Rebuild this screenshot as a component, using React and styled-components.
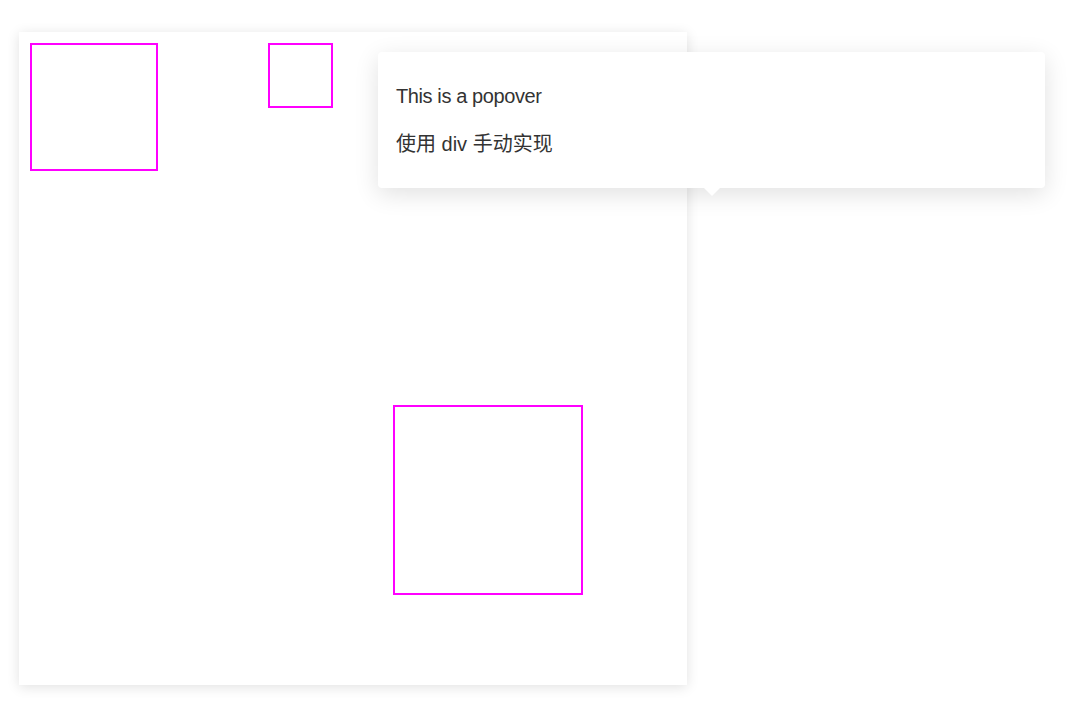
import styled, { createGlobalStyle } from 'styled-components';

const GlobalStyle = createGlobalStyle`
  html, body {
    margin: 0;
    padding: 0;
    background: #fff;
    font-family: "Liberation Sans", "Noto Sans CJK SC", sans-serif;
  }
`;

const Page = styled.div`
  position: relative;
  width: 1081px;
  height: 709px;
  padding: 32px 0 0 19px;
  box-sizing: border-box;
`;

const Card = styled.div`
  position: relative;
  width: 668px;
  height: 653px;
  background: #fff;
  box-shadow: 0 2px 12px 0 rgba(0, 0, 0, 0.12);
`;

const Target = styled.div`
  position: absolute;
  left: ${props => props.left}px;
  top: ${props => props.top}px;
  width: ${props => props.size}px;
  height: ${props => props.size}px;
  box-sizing: border-box;
  border: 2px solid #ff00ff;
`;

const Popover = styled.div`
  position: absolute;
  left: 378px;
  top: 52px;
  width: 667px;
  box-sizing: border-box;
  padding: 10px 18px;
  background: #fff;
  border-radius: 4px;
  box-shadow: 0 6px 24px 0 rgba(0, 0, 0, 0.12);
  color: #333;

  &::after {
    content: '';
    position: absolute;
    left: 50%;
    bottom: -8px;
    margin-left: -8px;
    border-style: solid;
    border-width: 8px 8px 0 8px;
    border-color: #fff transparent transparent transparent;
  }
`;

const Line = styled.p`
  margin: 20px 0;
  font-size: 20px;
  line-height: 28px;
  letter-spacing: ${props => (props.tight ? '-0.4px' : '0')};
`;

const App = () => (
  <>
    <GlobalStyle />
    <Page>
      <Card>
        <Target left={11} top={11} size={128} />
        <Target left={249} top={11} size={65} />
        <Target left={374} top={373} size={190} />
      </Card>
      <Popover>
        <Line tight>This is a popover</Line>
        <Line>使用 div 手动实现</Line>
      </Popover>
    </Page>
  </>
);

export default App;
